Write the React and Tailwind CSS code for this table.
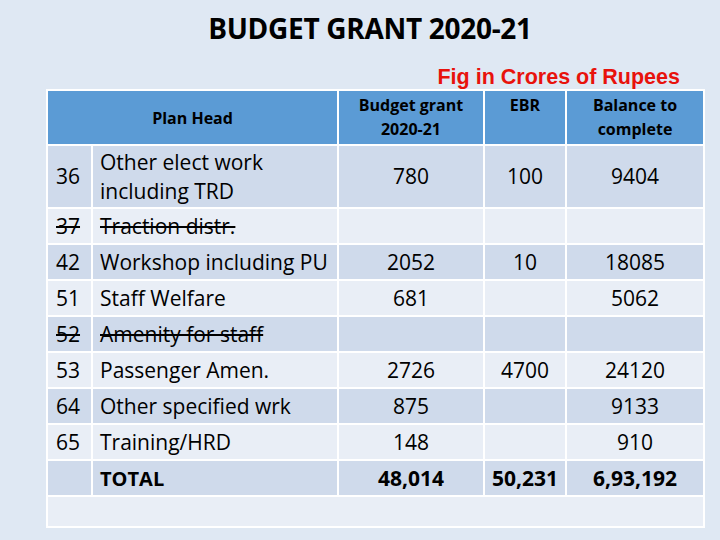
import React from "react";

const rows = [
  { no: "36", head: "Other elect work including TRD", grant: "780", ebr: "100", bal: "9404", tall: true },
  { no: "37", head: "Traction distr.", strike: true },
  { no: "42", head: "Workshop including PU", grant: "2052", ebr: "10", bal: "18085" },
  { no: "51", head: "Staff Welfare", grant: "681", bal: "5062" },
  { no: "52", head: "Amenity for staff", strike: true },
  { no: "53", head: "Passenger Amen.", grant: "2726", ebr: "4700", bal: "24120" },
  { no: "64", head: "Other specified wrk", grant: "875", bal: "9133" },
  { no: "65", head: "Training/HRD", grant: "148", bal: "910" },
];

export default function App() {
  return (
    <div
      className="w-[720px] h-[540px] bg-[#dfe8f3] text-black overflow-hidden"
      style={{ fontFamily: '"Open Sans", "Noto Sans", sans-serif' }}
    >
      <h1 className="pt-[8px] pl-[20px] text-center text-[28px] font-bold leading-[40px] tracking-[-0.3px]">
        BUDGET GRANT 2020-21
      </h1>

      <div className="flex justify-end pr-[40px] mt-[17px]">
        <span className="font-['Liberation_Sans',Arial,sans-serif] text-[21.5px] font-bold text-[#e8120c] leading-[24px]">
          Fig in Crores of Rupees
        </span>
      </div>

      <div className="pl-[46px]">
        <table className="w-[657px] border-collapse table-fixed">
          <colgroup>
            <col className="w-[45px]" />
            <col className="w-[246px]" />
            <col className="w-[146px]" />
            <col className="w-[82px]" />
            <col className="w-[138px]" />
          </colgroup>
          <thead>
            <tr className="h-[55px] bg-[#5b9bd5] text-[16px] font-bold leading-[24px]">
              <th colSpan="2" className="border-2 border-white text-center align-middle">
                Plan Head
              </th>
              <th className="border-2 border-white text-center align-top pt-[2px]">
                Budget grant
                <br />
                2020-21
              </th>
              <th className="border-2 border-white text-center align-top pt-[2px]">EBR</th>
              <th className="border-2 border-white text-center align-top pt-[2px]">
                Balance to
                <br />
                complete
              </th>
            </tr>
          </thead>
          <tbody className="text-[21px] leading-[29px]">
            {rows.map((r, i) => (
              <tr
                key={r.no}
                className={`${r.tall ? "h-[63px]" : "h-[36px]"} ${
                  i % 2 === 0 ? "bg-[#cfdaeb]" : "bg-[#e9eef6]"
                }`}
              >
                <td className={`border-2 border-white pl-[8px] ${r.strike ? "line-through" : ""}`}>
                  {r.no}
                </td>
                <td className={`border-2 border-white pl-[7px] ${r.strike ? "line-through" : ""}`}>
                  {r.tall ? (
                    <>
                      Other elect work
                      <br />
                      including TRD
                    </>
                  ) : (
                    r.head
                  )}
                </td>
                <td className="border-2 border-white text-center">{r.grant}</td>
                <td className="border-2 border-white text-center">{r.ebr}</td>
                <td className="border-2 border-white text-center">{r.bal}</td>
              </tr>
            ))}
            <tr className="h-[36px] bg-[#cfdaeb] font-bold">
              <td className="border-2 border-white"></td>
              <td className="border-2 border-white pl-[7px] text-[20px]">TOTAL</td>
              <td className="border-2 border-white text-center">48,014</td>
              <td className="border-2 border-white text-center">50,231</td>
              <td className="border-2 border-white text-center">6,93,192</td>
            </tr>
            <tr className="h-[31px] bg-[#e9eef6]">
              <td colSpan="5" className="border-2 border-white"></td>
            </tr>
          </tbody>
        </table>
      </div>
    </div>
  );
}
